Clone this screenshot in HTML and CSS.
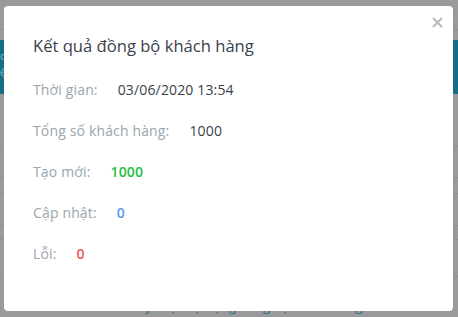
FILE: index.html
```html
<!DOCTYPE html>
<html lang="vi">
<head>
<meta charset="utf-8">
<link rel="stylesheet" href="styles.css">
</head>
<body>
<div class="page">
  <div class="topbar"></div>
  <div class="banner"><span class="banner-text">o<br>ệ</span></div>
  <div class="rows">
    <div class="row r1"></div>
    <div class="row r2"></div>
    <div class="row r3"></div>
    <div class="row r4"></div>
    <div class="row r5"></div>
    <div class="row r6"></div>
  </div>
  <div class="link">Tùy chọn tự động đồng bộ khách hàng</div>
</div>
<div class="modal">
  <button class="close" aria-label="Đóng">
    <svg width="11" height="11" viewBox="0 0 11 11"><path d="M1 1L10 10M10 1L1 10" stroke="#b9b9b9" stroke-width="2"/></svg>
  </button>
  <h2 class="title">Kết quả đồng bộ khách hàng</h2>
  <div class="item"><span class="label">Thời gian:</span><span class="value">03/06/2020 13:54</span></div>
  <div class="item"><span class="label">Tổng số khách hàng:</span><span class="value">1000</span></div>
  <div class="item"><span class="label">Tạo mới:</span><span class="value green">1000</span></div>
  <div class="item"><span class="label">Cập nhật:</span><span class="value blue">0</span></div>
  <div class="item"><span class="label">Lỗi:</span><span class="value red">0</span></div>
</div>
</body>
</html>
```
FILE: styles.css
```css
html, body {
  margin: 0;
  padding: 0;
  height: 100%;
  overflow: hidden;
}
body {
  background: #9a9a9a;
  font-family: "Open Sans", "Liberation Sans", sans-serif;
}
.page {
  display: flex;
  flex-direction: column;
  height: 317px;
}
.topbar {
  height: 29px;
  border-bottom: 1px solid #8d8d8d;
  margin-bottom: 10px;
}
.banner {
  height: 54px;
  background: #166e84;
  color: #8fb7c2;
  font-size: 11px;
  line-height: 16px;
}
.banner-text {
  display: block;
  margin-top: 8px;
  margin-left: 0;
}
.rows {
  display: flex;
  flex-direction: column;
}
.row {
  border-bottom: 1px solid #8f8f8f;
}
.r1 { height: 52px; }
.r2 { height: 30px; }
.r3 { height: 15px; }
.r4 { height: 31px; }
.r5 { height: 13px; }
.r6 { height: 36px; }
.link {
  margin-top: 21px;
  padding-left: 130px;
  color: #1d6a82;
  font-size: 13px;
  line-height: 16px;
}
.modal {
  position: absolute;
  left: 4px;
  top: 6px;
  width: 449px;
  height: 305px;
  background: #fff;
  border-radius: 4px;
  box-sizing: border-box;
  padding: 28px 29px 0 29px;
}
.close {
  position: absolute;
  right: 10px;
  top: 11px;
  border: 0;
  background: none;
  padding: 0;
  width: 11px;
  height: 11px;
  display: block;
}
.close svg { display: block; }
.title {
  margin: 0 0 22px 0;
  font-size: 16.6px;
  font-weight: 400;
  line-height: 24px;
  color: #3a3f4c;
}
.item {
  display: flex;
  gap: 20px;
  font-size: 14px;
  letter-spacing: 0.15px;
  line-height: 20px;
  margin-bottom: 21px;
}
.label { color: #98a6ad; }
.value { color: #3a3f4c; }
.green { color: #22c03c; font-weight: 600; }
.blue { color: #5b9bf0; font-weight: 600; }
.red { color: #f05454; font-weight: 600; }
```
